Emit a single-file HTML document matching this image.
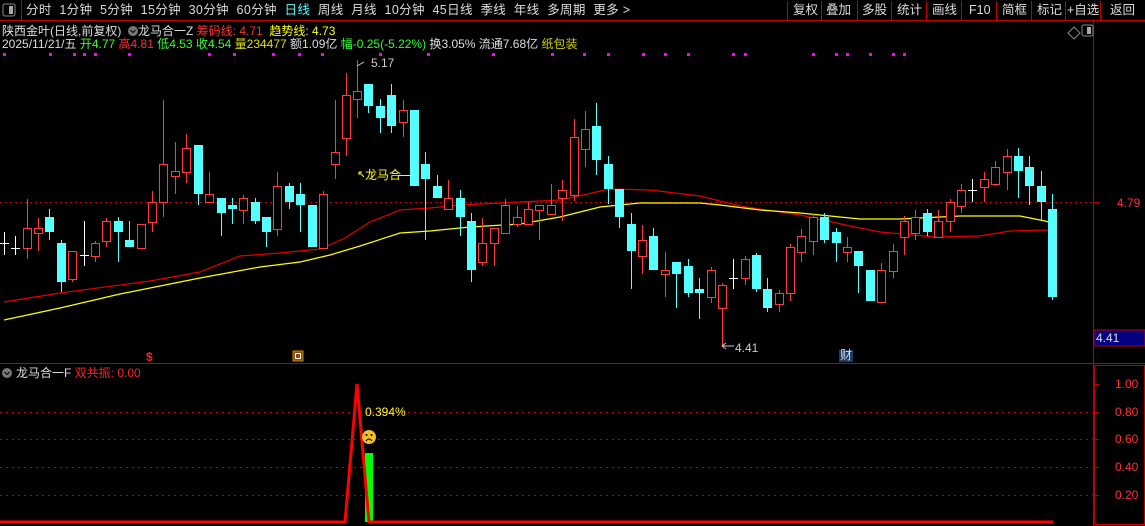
<!DOCTYPE html>
<html><head><meta charset="utf-8"><style>
html,body{margin:0;padding:0;background:#000;width:1145px;height:526px;overflow:hidden}
body{font-family:"Liberation Sans","Noto Sans CJK SC",sans-serif;font-size:12px;color:#ccc}
.t{position:absolute;white-space:nowrap;line-height:14px}
svg{position:absolute;left:0;top:0}
</style></head><body>
<svg id="s" width="1145" height="526" xmlns="http://www.w3.org/2000/svg">
<line x1="0" y1="20.5" x2="1145" y2="20.5" stroke="#c00000"/>
<rect x="3" y="4" width="12" height="12" fill="none" stroke="#888" rx="2"/><rect x="9" y="6" width="4" height="8" fill="#aaa"/>
<line x1="21.5" y1="0" x2="21.5" y2="20" stroke="#c00000"/>
<g stroke="#c00000"><line x1="787.5" y1="1" x2="787.5" y2="20"/><line x1="821.5" y1="1" x2="821.5" y2="20"/><line x1="857.5" y1="1" x2="857.5" y2="20"/><line x1="891.5" y1="1" x2="891.5" y2="20"/><line x1="926.5" y1="1" x2="926.5" y2="20"/><line x1="961.5" y1="1" x2="961.5" y2="20"/><line x1="996.5" y1="1" x2="996.5" y2="20"/><line x1="1031.5" y1="1" x2="1031.5" y2="20"/><line x1="1065.5" y1="1" x2="1065.5" y2="20"/><line x1="1100.5" y1="1" x2="1100.5" y2="20"/></g>
<line x1="1093.5" y1="21" x2="1093.5" y2="526" stroke="#c00000"/>
<path d="M1074 27 L1080 33 L1074 39 L1068 33 Z" fill="none" stroke="#888"/>
<rect x="1082" y="25" width="11" height="11" fill="none" stroke="#888" rx="2"/><rect x="1087" y="27" width="4" height="7" fill="#aaa"/>
<line x1="0" y1="202.5" x2="1093" y2="202.5" stroke="#c00000" stroke-dasharray="2,3"/>
<line x1="1093" y1="202.5" x2="1100" y2="202.5" stroke="#c00000"/>
<rect x="1094" y="330" width="51" height="16" fill="#000080" stroke="#c00000"/>
<line x1="0" y1="363.5" x2="1145" y2="363.5" stroke="#c00000"/>
<rect x="1094.5" y="365.5" width="50" height="159" fill="none" stroke="#c00000"/>
<g stroke="#c00000" stroke-dasharray="2,4"><line x1="0" y1="412.5" x2="1093" y2="412.5"/><line x1="0" y1="439.5" x2="1093" y2="439.5"/><line x1="0" y1="467.5" x2="1093" y2="467.5"/><line x1="0" y1="495.5" x2="1093" y2="495.5"/></g>
<g stroke="#c00000"><line x1="1094" y1="384.5" x2="1099" y2="384.5"/><line x1="1094" y1="412.5" x2="1099" y2="412.5"/><line x1="1094" y1="439.5" x2="1099" y2="439.5"/><line x1="1094" y1="467.5" x2="1099" y2="467.5"/><line x1="1094" y1="495.5" x2="1099" y2="495.5"/></g>
<polyline points="4,302 60,293 150,281 200,272 240,256 280,253 320,249 345,238 370,222 400,210 430,208 460,205 500,203 560,200 610,189 650,190 700,196 740,206 800,215 850,226 880,232 935,237 980,236 1010,231 1045,230 1052,232" fill="none" stroke="#e00000" stroke-width="1.2"/>
<polyline points="4,320 60,308 120,294 160,286 200,278 260,267 300,262 330,255 360,246 400,233 430,231 470,227 520,224 560,217 600,207 640,203 700,203 720,205 760,210 800,213 860,219 900,219 960,216 1020,216 1045,221 1052,223" fill="none" stroke="#ffff00" stroke-width="1.2"/>
<g id="c"></g>
<rect x="365" y="453" width="8" height="69" fill="#00ff00"/>
<polyline points="0,522 345,522 357,384 369,522 1053,522" fill="none" stroke="#ff0000" stroke-width="3"/>
<circle cx="369" cy="437" r="7" fill="#f0c020"/>
<circle cx="366.5" cy="435" r="1" fill="#000"/><circle cx="371.5" cy="435" r="1" fill="#000"/>
<path d="M366 441 Q369 437 372 441" fill="none" stroke="#000"/>
<rect x="293" y="351" width="10" height="10" fill="#8a4a10" stroke="#c80"/><rect x="295.5" y="353.5" width="5" height="5" fill="none" stroke="#fff"/>
<rect x="839" y="350" width="14" height="12" fill="#1a3a6a"/>
<path d="M357 66 L364 62" stroke="#ccc"/><path d="M722 346 L734 346 M722 346 L726 343 M722 346 L726 349" stroke="#ccc"/>
<path d="M359 172 L364 177 M359 172 L359 175 M359 172 L362 172" stroke="#ffff00"/>
<line x1="398" y1="175.5" x2="414" y2="175.5" stroke="#ffff00"/>
<g fill="#ff00ff" id="d"></g>
<circle cx="7" cy="373" r="5" fill="#777"/><path d="M4.5 372 L7 374.5 L9.5 372" stroke="#000" fill="none"/>
<circle cx="133" cy="31" r="5" fill="#777"/><path d="M130.5 30 L133 32.5 L135.5 30" stroke="#000" fill="none"/>
</svg>
<div class="t" style="left:26px;top:3px;color:#ddd;font-size:12.5px;letter-spacing:0.35px">分时&nbsp; 1分钟&nbsp; 5分钟&nbsp; 15分钟&nbsp; 30分钟&nbsp; 60分钟&nbsp; <span style="color:#55ffff">日线</span>&nbsp; 周线&nbsp; 月线&nbsp; 10分钟&nbsp; 45日线&nbsp; 季线&nbsp; 年线&nbsp; 多周期&nbsp; 更多 &gt;</div>
<div class="t" style="left:793px;top:3px;color:#ddd;font-size:12.5px">复权</div>
<div class="t" style="left:826px;top:3px;color:#ddd;font-size:12.5px">叠加</div>
<div class="t" style="left:862px;top:3px;color:#ddd;font-size:12.5px">多股</div>
<div class="t" style="left:897px;top:3px;color:#ddd;font-size:12.5px">统计</div>
<div class="t" style="left:932px;top:3px;color:#ddd;font-size:12.5px">画线</div>
<div class="t" style="left:969px;top:3px;color:#ddd;font-size:12.5px">F10</div>
<div class="t" style="left:1002px;top:3px;color:#ddd;font-size:12.5px">简框</div>
<div class="t" style="left:1037px;top:3px;color:#ddd;font-size:12.5px">标记</div>
<div class="t" style="left:1067px;top:3px;color:#ddd;font-size:12.5px">+自选</div>
<div class="t" style="left:1110px;top:3px;color:#ddd;font-size:12.5px">返回</div>
<div class="t" style="left:2px;top:24px;color:#ddd">陕西金叶(日线,前复权)&nbsp; &nbsp; &nbsp;龙马合一Z <span style="color:#ff3030">筹码线: 4.71</span>&nbsp; <span style="color:#ffff00">趋势线: 4.73</span></div>
<div class="t" style="left:2px;top:37px;color:#ddd">2025/11/21/五 <span style="color:#30ff30">开4.77</span> <span style="color:#ff3030">高4.81</span> <span style="color:#30ff30">低4.53</span> <span style="color:#30ff30">收4.54</span> <span style="color:#e0e000">量234477</span> 额1.09亿 <span style="color:#30ff30">幅-0.25(-5.22%)</span> 换3.05% 流通7.68亿 <span style="color:#d0d000">纸包装</span></div>
<div class="t" style="left:371px;top:56px;color:#ccc">5.17</div>
<div class="t" style="left:735px;top:341px;color:#ccc">4.41</div>
<div class="t" style="left:365px;top:168px;color:#ffff00">龙马合</div>
<div class="t" style="left:1117px;top:196px;color:#ff3030">4.79</div>
<div class="t" style="left:1096px;top:331px;color:#ddd">4.41</div>
<div class="t" style="left:146px;top:350px;color:#ff2020;font-weight:bold">$</div>
<div class="t" style="left:840px;top:348px;color:#ddd">财</div>
<div class="t" style="left:16px;top:366px;color:#ddd">龙马合一F <span style="color:#ff2020">双共振: 0.00</span></div>
<div class="t" style="left:365px;top:405px;color:#ffff00">0.394%</div>
<div class="t" style="left:1115px;top:377px;color:#ff3030">1.00</div>
<div class="t" style="left:1115px;top:405px;color:#ff3030">0.80</div>
<div class="t" style="left:1115px;top:432px;color:#ff3030">0.60</div>
<div class="t" style="left:1115px;top:460px;color:#ff3030">0.40</div>
<div class="t" style="left:1115px;top:488px;color:#ff3030">0.20</div>
<script>
var C=[[4,243,243,232,255,'w'],[15,248,248,236,255,'w'],[27,228,248,199,259,'r'],[38,228,233,218,251,'r'],[49,217,232,209,240,'c'],[61,243,282,240,292,'c'],[72,251,279,251,282,'r'],[84,255,255,221,266,'w'],[95,243,256,241,262,'r'],[106,221,241,218,247,'r'],[118,221,232,217,262,'c'],[129,240,247,221,247,'c'],[141,224,248,224,248,'r'],[152,202,222,191,232,'r'],[163,164,202,100,217,'r'],[175,171,176,142,194,'r'],[186,148,172,134,183,'r'],[198,145,194,145,205,'c'],[209,194,202,172,202,'r'],[221,198,213,198,236,'c'],[232,205,209,198,224,'c'],[243,198,210,195,224,'r'],[255,202,221,198,224,'c'],[266,217,232,217,247,'c'],[277,186,229,172,236,'r'],[289,186,202,183,209,'c'],[300,194,205,183,232,'c'],[312,205,247,205,247,'c'],[323,194,248,191,248,'r'],[335,152,164,100,179,'r'],[346,95,138,73,156,'r'],[357,91,99,60,118,'r'],[368,84,106,84,113,'c'],[380,106,118,99,133,'c'],[391,95,126,84,133,'c'],[403,110,122,100,137,'r'],[414,110,186,110,186,'c'],[425,164,179,152,240,'c'],[437,186,198,175,198,'c'],[448,198,209,180,209,'r'],[460,198,217,190,236,'c'],[471,221,270,213,282,'c'],[482,243,262,218,266,'r'],[494,228,243,228,266,'r'],[505,205,233,199,233,'r'],[517,217,224,206,227,'r'],[528,209,224,202,224,'r'],[539,205,210,205,240,'r'],[551,205,214,184,214,'r'],[562,190,198,180,221,'r'],[574,137,195,119,201,'r'],[585,129,149,111,167,'r'],[596,126,160,103,175,'c'],[608,164,189,156,204,'c'],[619,189,217,189,228,'c'],[631,224,251,213,289,'c'],[642,240,256,225,274,'r'],[653,236,270,228,270,'c'],[665,270,274,252,297,'r'],[676,262,274,262,308,'c'],[688,266,293,259,297,'c'],[699,289,293,278,319,'c'],[711,270,297,267,303,'r'],[722,285,308,283,346,'r'],[733,278,278,259,289,'w'],[745,259,278,256,285,'r'],[756,255,289,253,292,'c'],[767,289,308,278,312,'c'],[779,293,304,290,312,'r'],[790,247,293,244,301,'r'],[801,236,252,229,262,'r'],[813,217,241,214,255,'r'],[824,217,240,213,243,'c'],[836,232,243,228,262,'c'],[847,247,252,237,262,'r'],[858,251,266,251,293,'c'],[870,270,301,270,301,'c'],[881,270,302,263,302,'r'],[893,251,271,244,278,'r'],[904,221,237,216,255,'r'],[915,217,233,210,240,'r'],[927,213,232,209,236,'c'],[938,221,237,210,237,'r'],[950,202,221,199,232,'r'],[961,190,206,184,213,'r'],[972,190,190,179,202,'w'],[984,179,187,172,202,'r'],[995,167,184,161,186,'r'],[1007,156,172,149,190,'r'],[1018,156,171,148,198,'c'],[1029,167,186,156,205,'c'],[1041,186,202,171,220,'c'],[1052,209,297,194,300,'c']];
var h='';C.forEach(function(k){var x=k[0],col=k[5];
if(col=='w'){h+='<line x1="'+(x+.5)+'" y1="'+k[3]+'" x2="'+(x+.5)+'" y2="'+k[4]+'" stroke="#fff"/><line x1="'+(x-4)+'" y1="'+(k[1]+.5)+'" x2="'+(x+5)+'" y2="'+(k[1]+.5)+'" stroke="#fff"/>';return;}
var s=col=='r'?'#ff3a3a':'#55ffff';
h+='<line x1="'+(x+.5)+'" y1="'+k[3]+'" x2="'+(x+.5)+'" y2="'+k[4]+'" stroke="'+s+'"/>';
var hh=Math.max(k[2]-k[1],2);
if(col=='r')h+='<rect x="'+(x-3.5)+'" y="'+(k[1]+.5)+'" width="8" height="'+hh+'" fill="#000" stroke="'+s+'"/>';
else h+='<rect x="'+(x-4)+'" y="'+k[1]+'" width="9" height="'+hh+'" fill="'+s+'"/>';});
document.getElementById('c').innerHTML=h;
var D=[3,49,73,83,94,128,208,233,272,298,321,379,427,492,551,583,607,642,664,687,732,744,812,835,846,869,892,903],g='';
D.forEach(function(x){g+='<rect x="'+x+'" y="53" width="3" height="3"/>';});
document.getElementById('d').innerHTML=g;
</script>
</body></html>
